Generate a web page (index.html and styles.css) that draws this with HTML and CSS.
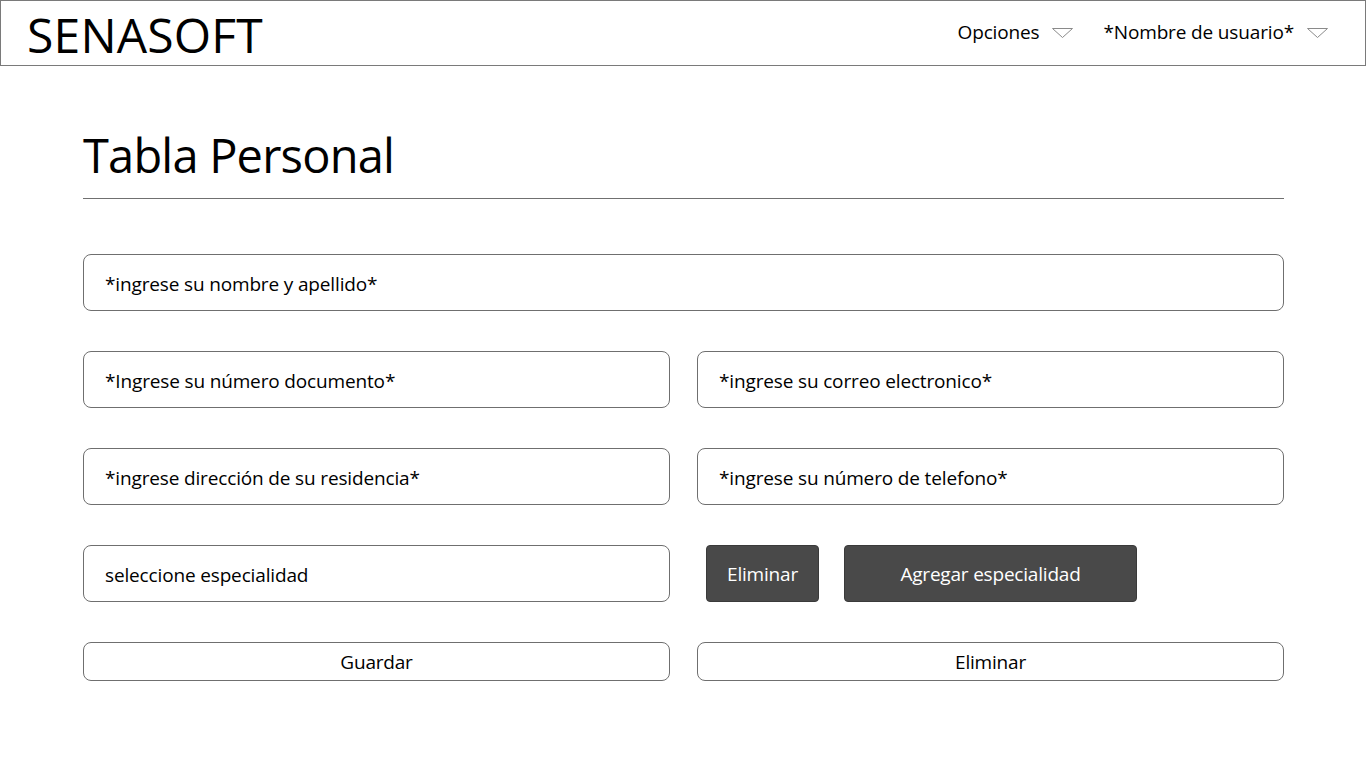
FILE: index.html
```html
<!DOCTYPE html>
<html lang="es">
<head>
<meta charset="utf-8">
<title>SENASOFT - Tabla Personal</title>
<link rel="stylesheet" href="styles.css">
</head>
<body>
<header class="topbar">
  <div class="brand">SENASOFT</div>
  <nav class="nav">
    <div class="nav-item">Opciones
      <svg class="caret" width="21" height="10" viewBox="0 0 21 10"><path d="M0.5 0.5 L20.5 0.5 L10.5 9.5 Z" fill="none" stroke="#8a8a8a" stroke-width="1" stroke-linejoin="round"/></svg>
    </div>
    <div class="nav-item">*Nombre de usuario*
      <svg class="caret" width="21" height="10" viewBox="0 0 21 10"><path d="M0.5 0.5 L20.5 0.5 L10.5 9.5 Z" fill="none" stroke="#8a8a8a" stroke-width="1" stroke-linejoin="round"/></svg>
    </div>
  </nav>
</header>
<main class="content">
  <h1 class="title">Tabla Personal</h1>
  <form class="form">
    <div class="row">
      <div class="field">*ingrese su nombre y apellido*</div>
    </div>
    <div class="row two">
      <div class="field">*Ingrese su número documento*</div>
      <div class="field">*ingrese su correo electronico*</div>
    </div>
    <div class="row two">
      <div class="field">*ingrese dirección de su residencia*</div>
      <div class="field">*ingrese su número de telefono*</div>
    </div>
    <div class="row two">
      <div class="field">seleccione especialidad</div>
      <div class="actions">
        <button type="button" class="dark small">Eliminar</button>
        <button type="button" class="dark wide">Agregar especialidad</button>
      </div>
    </div>
    <div class="row two">
      <button type="button" class="outline">Guardar</button>
      <button type="button" class="outline">Eliminar</button>
    </div>
  </form>
</main>
</body>
</html>
```
FILE: styles.css
```css
* { box-sizing: border-box; }
html, body { margin: 0; padding: 0; background: #fff; }
body {
  font-family: "Open Sans", "Noto Sans", "DejaVu Sans", sans-serif;
  color: #000;
}
.topbar {
  height: 66px;
  border: 1px solid #7a7a7a;
  display: flex;
  align-items: center;
  justify-content: space-between;
  padding: 0 37px 0 26px;
}
.brand {
  font-size: 48px;
  line-height: 1;
  letter-spacing: 0.2px;
  margin-top: 4px;
}
.nav {
  display: flex;
  gap: 30px;
  align-items: center;
  margin-bottom: 3px;
}
.nav-item {
  font-size: 19px;
  display: flex;
  align-items: center;
  gap: 13px;
  letter-spacing: -0.15px;
}
.caret { margin-top: 2px; }
.content {
  padding: 0 82px 0 83px;
}
.title {
  margin: 0;
  font-weight: 400;
  font-size: 47px;
  letter-spacing: -0.8px;
  line-height: 47px;
  padding-top: 66px;
  padding-bottom: 19px;
  border-bottom: 1px solid #707070;
}
.form {
  display: flex;
  flex-direction: column;
  gap: 40px;
  padding-top: 55px;
}
.row { display: grid; grid-template-columns: 1fr; }
.row.two { grid-template-columns: 1fr 1fr; column-gap: 27px; }
.field {
  height: 57px;
  border: 1px solid #6f6f6f;
  border-radius: 8px;
  display: flex;
  align-items: center;
  padding: 2px 21px 0;
  font-size: 19px;
  letter-spacing: -0.15px;
}
.actions {
  display: flex;
  gap: 25px;
  padding-left: 9px;
}
button {
  font-family: inherit;
  cursor: pointer;
}
.dark {
  height: 57px;
  background: #494949;
  color: #fff;
  border: 1px solid #3a3a3a;
  border-radius: 4px;
  font-size: 19px;
  letter-spacing: -0.2px;
  padding: 1px 0 0;
}
.dark.small { width: 113px; }
.dark.wide { width: 293px; }
.outline {
  height: 39px;
  background: #fff;
  border: 1px solid #6f6f6f;
  border-radius: 8px;
  font-size: 19px;
  letter-spacing: -0.2px;
  color: #000;
  padding: 1px 0 0;
}
```
